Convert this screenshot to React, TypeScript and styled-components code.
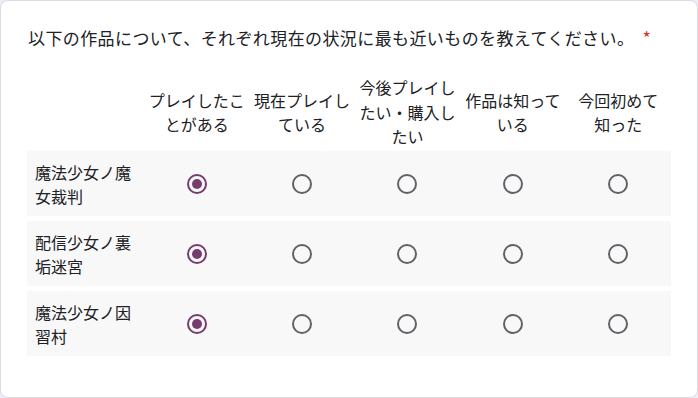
import React from "react";
import styled, { createGlobalStyle } from "styled-components";

const Global = createGlobalStyle`
  html, body { margin: 0; padding: 0; background: #f0ebf8; }
  body { font-family: "Noto Sans CJK JP", "Noto Sans", Roboto, sans-serif; color: #202124; }
  * { box-sizing: border-box; }
`;

const Card = styled.div`
  width: 698px;
  height: 398px;
  background: #fff;
  border: 1px solid #dadce0;
  border-radius: 8px;
  padding: 24px 26px 0 26px;
`;

const Title = styled.div`
  font-size: 17px;
  letter-spacing: 0.4px;
  line-height: 24px;
  padding-left: 1px;
  margin-bottom: 23px;
`;

const Required = styled.span`
  color: #d93025;
  padding-left: 0.45em;
  font-size: 18px;
`;

const Grid = styled.div`
  display: grid;
  grid-template-columns: 117px repeat(5, 105.4px);
  width: 644px;
`;

const HeaderRow = styled.div`
  display: contents;
`;

const HeaderCell = styled.div`
  display: flex;
  align-items: center;
  justify-content: center;
  padding: 0 4px;
  height: 78px;
`;

const HeaderText = styled.div`
  text-align: center;
  font-size: 16px;
  line-height: 24.5px;
  line-break: strict;
`;

const Keep = styled.span`
  white-space: nowrap;
`;

const Rows = styled.div`
  grid-column: 1 / -1;
  display: flex;
  flex-direction: column;
  gap: 5px;
`;

const Row = styled.div`
  display: grid;
  grid-template-columns: 117px repeat(5, 105.4px);
  height: 65px;
  background: #f8f8f8;
  align-items: center;
`;

const RowLabel = styled.div`
  font-size: 16px;
  line-height: 24px;
  padding-left: 8px;
  padding-right: 4px;
`;

const RadioCell = styled.div`
  display: flex;
  justify-content: center;
  align-items: center;
`;

const Radio = styled.div<{ $checked?: boolean }>`
  width: 20px;
  height: 20px;
  border-radius: 50%;
  border: 2px solid ${(p) => (p.$checked ? "#773c6e" : "#5f6368")};
  display: flex;
  align-items: center;
  justify-content: center;
  &::after {
    content: "";
    width: 10px;
    height: 10px;
    border-radius: 50%;
    background: ${(p) => (p.$checked ? "#773c6e" : "transparent")};
  }
`;

const columns: React.ReactNode[] = [
  "プレイしたことがある",
  "現在プレイしている",
  "今後プレイしたい・購入したい",
  "作品は知っている",
  <>
    今回初めて<Keep>知った</Keep>
  </>,
];

const rows = ["魔法少女ノ魔女裁判", "配信少女ノ裏垢迷宮", "魔法少女ノ因習村"];

export default function App() {
  return (
    <>
      <Global />
      <Card lang="ja">
        <Title>
          以下の作品について、それぞれ現在の状況に最も近いものを教えてください。
          <Required>*</Required>
        </Title>
        <Grid>
          <HeaderRow>
            <HeaderCell />
            {columns.map((c, i) => (
              <HeaderCell key={i}>
                <HeaderText>{c}</HeaderText>
              </HeaderCell>
            ))}
          </HeaderRow>
          <Rows>
            {rows.map((r) => (
              <Row key={r}>
                <RowLabel>{r}</RowLabel>
                {columns.map((_, i) => (
                  <RadioCell key={i}>
                    <Radio $checked={i === 0} />
                  </RadioCell>
                ))}
              </Row>
            ))}
          </Rows>
        </Grid>
      </Card>
    </>
  );
}
